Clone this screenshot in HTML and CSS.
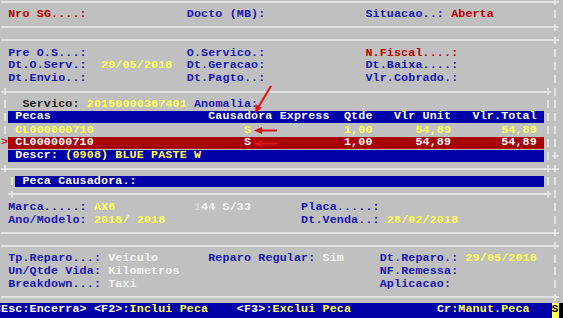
FILE: index.html
```html
<!DOCTYPE html>
<html lang="pt">
<head>
    <meta charset="UTF-8">
    <meta name="viewport" content="width=device-width, initial-scale=1.0">
    <title>Ordem de Servico</title>
    <link rel="stylesheet" href="styles.css">
</head>
<body>
    <div class="screen">
        <div class="row"><div class="hl"></div><div class="cell pl"></div></div>
        <div class="row"><div class="txt"> <span class="r">Nro SG....:</span>              Docto (MB):              Situacao..: <span class="r">Aberta</span></div><div class="cell vb"></div></div>
        <div class="row"><div class="hl"></div><div class="cell pl"></div></div>
        <div class="row"><div class="hl"></div><div class="cell pl"></div></div>
        <div class="row"><div class="txt"> Pre O.S...:              O.Servico.:              <span class="r">N.Fiscal....:</span></div><div class="cell vb"></div></div>
        <div class="row"><div class="txt"> Dt.O.Serv.:  <span class="y">29/05/2018</span>  Dt.Geracao:              Dt.Baixa....:</div><div class="cell vb"></div></div>
        <div class="row"><div class="txt"> Dt.Envio..:              Dt.Pagto..:              Vlr.Cobrado.:</div><div class="cell vb"></div></div>
        <div class="row"><div class="cell pl"></div><div class="hl"></div><div class="cell pl"></div><div class="cell vb"></div></div>

        <div class="row"><div class="cell vb"></div><div class="txt">  <span class="k">Servico:</span> <span class="y">20150000367401</span> Anomalia:</div><div class="cell vb"></div><div class="cell vb"></div></div>
        <div class="row"><div class="cell vb"></div><div class="bar blue"> Pecas                      Causadora Express  Qtde   Vlr Unit   Vlr.Total</div><div class="cell vb"></div><div class="cell vb"></div></div>
        <div class="row"><div class="cell vb"></div><div class="txt y"> CL000000710                     S             1,00      54,89       54,89</div><div class="cell vb"></div><div class="cell vb"></div></div>
        <div class="row"><div class="cell gt">&gt;</div><div class="bar red"> CL000000710                     S             1,00      54,89       54,89</div><div class="cell vb"></div><div class="cell vb"></div></div>
        <div class="row"><div class="cell"></div><div class="bar blue"> Descr: <span class="y">(0908) BLUE PASTE W</span></div><div class="cell vb"></div><div class="cell pl"></div></div>
        <div class="row"><div class="cell pl"></div><div class="hl"></div><div class="cell pl"></div><div class="cell pl"></div></div>

        <div class="row"><div class="cell"></div><div class="cell vb"></div><div class="bar blue"> Peca Causadora.:</div><div class="cell vb"></div><div class="cell vb"></div></div>
        <div class="row"><div class="cell"></div><div class="cell pl"></div><div class="hl"></div><div class="cell pl"></div><div class="cell vb"></div></div>
        <div class="row"><div class="txt"> Marca.....: <span class="y">AX6</span>           <span class="f">1</span><span class="w">44 S/33</span>       Placa.....:</div><div class="cell vb"></div></div>
        <div class="row"><div class="txt"> Ano/Modelo: <span class="y">2018/ 2018</span>                   Dt.Venda..: <span class="y">28/02/2018</span></div><div class="cell vb"></div></div>
        <div class="row"><div class="hl"></div><div class="cell pl"></div></div>
        <div class="row"><div class="hl"></div><div class="cell pl"></div></div>

        <div class="row"><div class="txt"> Tp.Reparo...: <span class="w">Veiculo</span>       Reparo Regular: <span class="w">Sim</span>     Dt.Reparo.: <span class="y">29/05/2018</span></div><div class="cell vb"></div></div>
        <div class="row"><div class="txt"> Un/Qtde Vida: <span class="w">Kilometros</span>                            NF.Remessa:</div><div class="cell vb"></div></div>
        <div class="row"><div class="txt"> Breakdown...: <span class="w">Taxi</span>                                  Aplicacao:</div><div class="cell vb"></div></div>
        <div class="row"><div class="hl"></div><div class="cell pl"></div></div>

        <div class="foot"><div class="keys">&lt;Esc:Encerra&gt; &lt;F2&gt;<span class="y">:Inclui Peca</span>    &lt;F3&gt;<span class="y">:Exclui Peca</span>            Cr<span class="y">:Manut.Peca</span></div><div class="cur">S</div><div class="rest"></div></div>
    </div>

    <svg class="marks" width="563" height="318" viewBox="0 0 563 318">
        <g fill="#e01414" stroke="#e01414" stroke-width="2">
            <line x1="271" y1="86" x2="259" y2="106" />
            <polygon stroke="none" points="255,113 262,107.7 255.8,104.3" />
            <line x1="262" y1="130.5" x2="277" y2="130.5" />
            <polygon stroke="none" points="254,130.5 262,127 262,134" />
            <line x1="262" y1="143.5" x2="277" y2="143.5" />
            <polygon stroke="none" points="254,143.5 262,140 262,147" />
        </g>
    </svg>
</body>
</html>
```

FILE: styles.css
```css
:root {
    --cw: 7.15px;
    --rh: 12.85px;
    --ln: #e2e2e2;
}

body {
    margin: 0;
    background-color: #c0c0c0;
    overflow: hidden;
}

.screen {
    width: calc(78 * var(--cw));
    margin-top: -4.8px;
    padding-left: 1px;
    font-family: "Liberation Mono", "DejaVu Sans Mono", monospace;
    font-size: 11.67px;
    font-weight: bold;
    letter-spacing: 0.15px;
    color: #1616b2;
}

.row {
    display: flex;
    align-items: center;
    height: var(--rh);
    line-height: var(--rh);
    white-space: pre;
}

.txt {
    flex: 1;
}

.hl {
    flex: 1;
    height: 2px;
    background: var(--ln);
}

.cell {
    flex: none;
    width: var(--cw);
    height: 8px;
}

.vb {
    background: linear-gradient(var(--ln), var(--ln)) center / 2px 100% no-repeat;
}

.pl {
    height: 7px;
    background:
        linear-gradient(var(--ln), var(--ln)) center / 100% 2px no-repeat,
        linear-gradient(var(--ln), var(--ln)) center / 2px 100% no-repeat;
}

.gt {
    height: auto;
    color: #d42020;
}

.bar {
    flex: 1;
    height: 11.6px;
    line-height: 11.6px;
    color: #fff;
}

.bar.blue {
    background: #0000a8;
}

.bar.red {
    background: #a80000;
}

.r { color: #b80000; }
.y { color: #ffff55; }
.w { color: #f4f4f4; }
.k { color: #1c1c1c; }
.f { color: #d4d4d4; }

.foot {
    display: flex;
    height: 15px;
    line-height: var(--rh);
    margin-left: calc(-1 * var(--cw));
    width: calc(100vw + var(--cw));
    white-space: pre;
    color: #fff;
}

.keys {
    flex: none;
    width: calc(78 * var(--cw));
    background: #0000a8;
}

.cur {
    flex: none;
    width: var(--cw);
    background: #ffff55;
    color: #000;
}

.rest {
    flex: 1;
    background: #000;
}

.marks {
    position: absolute;
    top: 0;
    left: 0;
    pointer-events: none;
}
```
